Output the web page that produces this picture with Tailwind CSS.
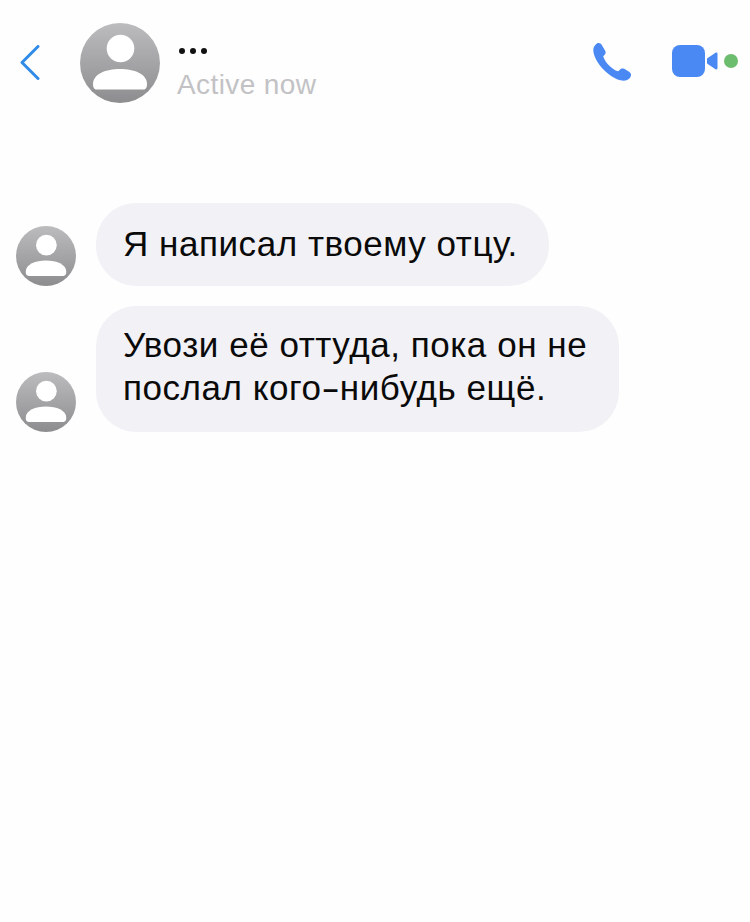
<!DOCTYPE html>
<html><head><meta charset="utf-8"><script src="https://cdn.jsdelivr.net/npm/@tailwindcss/browser@4"></script></head>
<body class="bg-white">
<div class="w-[750px] h-[922px] bg-[#fefefe] font-['Liberation_Sans',sans-serif] flex flex-col">
<svg width="0" height="0" class="absolute"><defs><linearGradient id="g" x1="0" y1="0" x2="0" y2="1"><stop offset="0" stop-color="#bcbcbf"/><stop offset="1" stop-color="#8d8d8f"/></linearGradient>
<symbol id="av" viewBox="0 0 80 80"><circle cx="40" cy="40" r="40" fill="url(#g)"/><circle cx="40.500" cy="25.500" r="13.800" fill="#fff"/><path d="M13 61C13 51 26 46 40 46S67 51 67 61C67 64.500 66 66.500 63 66.500H17C14 66.500 13 64.500 13 61Z" fill="#fff"/></symbol></defs></svg>
<header class="h-[126px] pt-[23px] flex items-start shrink-0">
  <svg class="ml-[20px] mt-[22px] shrink-0" width="20" height="35" viewBox="0 0 20 35" fill="none"><path d="M18 1.500L2 17.500L18 33.500" stroke="#2f8be6" stroke-width="3" stroke-linecap="round" stroke-linejoin="round"/></svg>
  <svg class="ml-[40px] w-[80px] h-[80px] shrink-0"><use href="#av"/></svg>
  <div class="ml-[17px] w-[200px]">
    <div class="flex gap-[5px] pl-[2px] pt-[25px] h-[36px]"><span class="size-[6px] rounded-full bg-[#111]"></span><span class="size-[6px] rounded-full bg-[#111]"></span><span class="size-[6px] rounded-full bg-[#111]"></span></div>
    <div class="text-[28px] tracking-[0.4px] leading-[52px] text-[#c2c2c5] whitespace-nowrap">Active now</div>
  </div>
  <svg class="ml-[215px] mt-[19px] shrink-0" width="41" height="41" viewBox="0 0 42 42"><path d="M5 1.500C7 .5 9 1.500 10 3L13.500 9C14.500 11 14 12.500 12.500 13.500L11.500 14.500C12 17 14.500 21 17.500 24C20.500 27 24 29.500 27 30L28.500 28.500C29.500 27 31.500 26.800 33 27.500L38 30.500C40.500 32 40.500 34.500 39 36.500C37 39 34 40 30.500 39.500C24 38.500 17.500 34 12 28.500C6.500 23 2.500 16 1.500 10.500C.8 6.500 2 3.500 5 1.500Z" fill="#4a89f3"/></svg>
  <div class="ml-[39px] mt-[22px] flex items-center shrink-0">
    <div class="w-[33px] h-[32px] rounded-[8px] bg-[#4a89f3]"></div>
    <svg class="ml-[2px]" width="11" height="18" viewBox="0 0 11 18"><path d="M0 6.500L8.500 .8C9.500 .3 10.500 .8 10.500 2V16C10.500 17.200 9.500 17.700 8.500 17.200L0 11.500Z" fill="#4a89f3"/></svg>
    <div class="ml-[6px] size-[14px] rounded-full bg-[#6cbd6e]"></div>
  </div>
</header>
<main class="pt-[77px] flex flex-col gap-[20px] pl-[16px]">
  <div class="flex items-end gap-[20px]">
    <svg class="w-[60px] h-[60px] shrink-0"><use href="#av"/></svg>
    <div class="h-[83px] w-[453px] rounded-[40px] bg-[#f2f1f6] pl-[27px] pt-[19px] text-[35px] tracking-[0.55px] leading-[43px] text-[#0a0a0a] whitespace-nowrap">Я написал твоему отцу.</div>
  </div>
  <div class="flex items-end gap-[20px]">
    <svg class="w-[60px] h-[60px] shrink-0"><use href="#av"/></svg>
    <div class="h-[126px] w-[523px] rounded-[40px] bg-[#f2f1f6] pl-[27px] pt-[17px] text-[35px] tracking-[0.55px] leading-[43px] text-[#0a0a0a] whitespace-nowrap">Увози её оттуда, пока он не<br>послал кого<span class="inline-block mx-[3px] scale-x-[1.6]">-</span>нибудь ещё.</div>
  </div>
</main>
</div>
</body></html>
